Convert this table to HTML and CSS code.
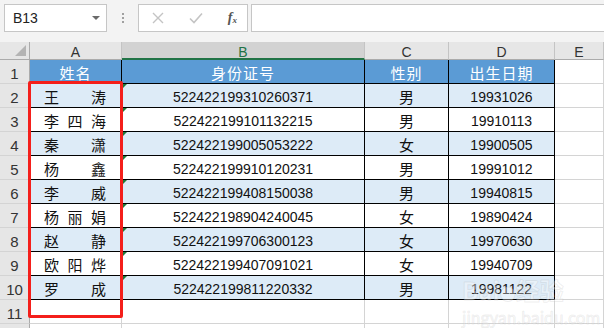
FILE: index.html
```html
<!DOCTYPE html>
<html lang="zh">
<head>
<meta charset="utf-8">
<link rel="stylesheet" href="styles.css">
</head>
<body>
<div class="app">
  <div class="fbar">
    <div class="namebox"><span>B13</span><span class="caret"></span></div>
    <div class="grip"><i></i><i></i><i></i></div>
    <div class="fxbox">
      <svg class="ico" width="12" height="12" viewBox="0 0 12 12"><path d="M1 1L11 11M11 1L1 11" stroke="#c4c4c4" stroke-width="1.4" fill="none"/></svg>
      <svg class="ico" width="14" height="12" viewBox="0 0 14 12"><path d="M1 6.5L5 10.5L13 1.5" stroke="#c4c4c4" stroke-width="1.6" fill="none"/></svg>
      <span class="fx">f<sub>x</sub></span>
    </div>
    <div class="input"></div>
  </div>
  <div class="sheetwrap">
    <div class="sheet">
      <div class="corner"><span class="tri"></span></div>
      <div class="ch">A</div><div class="ch sel">B</div><div class="ch">C</div><div class="ch">D</div><div class="ch">E</div>

      <div class="rh">1</div>
      <div class="c t hd">姓名</div><div class="c t hd">身份证号</div><div class="c t hd">性别</div><div class="c t hd">出生日期</div><div class="c g"></div>

      <div class="rh">2</div>
      <div class="c t alt nm"><span>王</span><span>涛</span></div><div class="c t alt id">522422199310260371</div><div class="c t alt sx">男</div><div class="c t alt">19931026</div><div class="c g"></div>

      <div class="rh">3</div>
      <div class="c t nm"><span>李</span><span>四</span><span>海</span></div><div class="c t id">522422199101132215</div><div class="c t sx">男</div><div class="c t">19910113</div><div class="c g"></div>

      <div class="rh">4</div>
      <div class="c t alt nm"><span>秦</span><span>潇</span></div><div class="c t alt id">522422199005053222</div><div class="c t alt sx">女</div><div class="c t alt">19900505</div><div class="c g"></div>

      <div class="rh">5</div>
      <div class="c t nm"><span>杨</span><span>鑫</span></div><div class="c t id">522422199910120231</div><div class="c t sx">男</div><div class="c t">19991012</div><div class="c g"></div>

      <div class="rh">6</div>
      <div class="c t alt nm"><span>李</span><span>威</span></div><div class="c t alt id">522422199408150038</div><div class="c t alt sx">男</div><div class="c t alt">19940815</div><div class="c g"></div>

      <div class="rh">7</div>
      <div class="c t nm"><span>杨</span><span>丽</span><span>娟</span></div><div class="c t id">522422198904240045</div><div class="c t sx">女</div><div class="c t">19890424</div><div class="c g"></div>

      <div class="rh">8</div>
      <div class="c t alt nm"><span>赵</span><span>静</span></div><div class="c t alt id">522422199706300123</div><div class="c t alt sx">女</div><div class="c t alt">19970630</div><div class="c g"></div>

      <div class="rh">9</div>
      <div class="c t nm"><span>欧</span><span>阳</span><span>烨</span></div><div class="c t id">522422199407091021</div><div class="c t sx">女</div><div class="c t">19940709</div><div class="c g"></div>

      <div class="rh">10</div>
      <div class="c t alt nm"><span>罗</span><span>成</span></div><div class="c t alt id">522422199811220332</div><div class="c t alt sx">男</div><div class="c t alt">19981122</div><div class="c g"></div>

      <div class="rh">11</div>
      <div class="c g"></div><div class="c g"></div><div class="c g"></div><div class="c g"></div><div class="c g"></div>

      <div class="rh"></div>
      <div class="c g"></div><div class="c g"></div><div class="c g"></div><div class="c g"></div><div class="c g"></div>
    </div>
    <div class="redbox"></div>
    <div class="wm"><div class="wm1">Bai<span class="paw">●</span>经验</div><div class="wm2">jingyan.baidu.com</div></div>
  </div>
</div>
</body>
</html>
```

FILE: styles.css
```css
* { box-sizing: border-box; }
html, body { margin: 0; padding: 0; }
body {
  width: 604px;
  height: 328px;
  overflow: hidden;
  background: #ffffff;
  font-family: "Liberation Sans", "Noto Sans CJK SC", sans-serif;
}
.app { width: 604px; height: 328px; overflow: hidden; }

.fbar {
  height: 42px;
  background: #f3f3f3;
  display: flex;
  align-items: flex-start;
  padding: 4px 0 0 4px;
}
.namebox {
  width: 103px;
  height: 28px;
  background: #fff;
  border: 1px solid #c6c6c6;
  display: flex;
  align-items: center;
  justify-content: space-between;
  padding: 0 6px 0 8px;
  font-size: 14px;
  color: #222;
}
.caret {
  width: 0; height: 0;
  border-left: 4px solid transparent;
  border-right: 4px solid transparent;
  border-top: 4px solid #6a6a6a;
}
.grip {
  width: 31px;
  height: 28px;
  display: flex;
  flex-direction: column;
  align-items: center;
  justify-content: center;
  gap: 2px;
}
.grip i {
  display: block;
  width: 2px; height: 2px;
  background: #a0a0a0;
}
.fxbox {
  width: 110px;
  height: 28px;
  background: #fff;
  border: 1px solid #c6c6c6;
  display: flex;
  align-items: center;
  justify-content: space-between;
  padding: 0 10px 0 13px;
}
.fx {
  font-family: "Liberation Serif", serif;
  font-style: italic;
  font-size: 14px;
  color: #555;
  line-height: 1;
  font-weight: bold;
}
.fx sub { font-size: 9px; vertical-align: -1px; }
.input {
  flex: 1;
  height: 28px;
  margin-left: 3px;
  background: #fff;
  border: 1px solid #c6c6c6;
  border-right: none;
}

.sheetwrap { position: relative; }
.sheet {
  display: grid;
  grid-template-columns: 30px 92px 243px 84px 106px 49px;
  grid-template-rows: 18px repeat(11, 24px) 24px;
}
.corner {
  background: #e6e6e6;
  border-right: 1px solid #ababab;
  border-bottom: 1px solid #ababab;
  position: relative;
}
.tri {
  position: absolute;
  right: 3px; bottom: 3px;
  width: 0; height: 0;
  border-left: 11px solid transparent;
  border-bottom: 11px solid #b4b4b4;
}
.ch {
  background: #e6e6e6;
  border-right: 1px solid #c4c4c4;
  border-bottom: 1px solid #ababab;
  font-size: 14px;
  color: #333;
  text-align: center;
  line-height: 19px;
  padding-top: 1px;
}
.ch.sel {
  background: #d2d2d2;
  color: #217346;
  border-bottom: 2px solid #217346;
}
.rh {
  background: #e6e6e6;
  border-right: 1px solid #ababab;
  border-bottom: 1px solid #d4d4d4;
  font-size: 15px;
  color: #333;
  text-align: center;
  line-height: 24px;
  padding-top: 2px;
}
.c {
  border-right: 1px solid #d4d4d4;
  border-bottom: 1px solid #d4d4d4;
  background: #fff;
  font-size: 14px;
  color: #111;
  display: flex;
  align-items: center;
  justify-content: center;
  padding-top: 3px;
  white-space: nowrap;
}
.c.t { border-right-color: #000; border-bottom-color: #000; }
.c.hd {
  background: #5b9bd5;
  color: #fff;
  font-family: "Noto Sans CJK SC", sans-serif;
  font-size: 15px;
  letter-spacing: 1px;
  padding-top: 1px;
}
.c.alt { background: #ddebf7; }
.nm {
  justify-content: space-between;
  padding-left: 14px;
  padding-right: 15px;
  font-family: "Noto Sans CJK SC", sans-serif;
  font-size: 15px;
  padding-top: 1px;
}
.sx { font-family: "Noto Sans CJK SC", sans-serif; font-size: 15px; padding-top: 1px; }
.id { position: relative; }
.id::before {
  content: "";
  position: absolute;
  left: 0; top: 0;
  width: 0; height: 0;
  border-top: 5px solid #1f7a3a;
  border-right: 5px solid transparent;
}
.redbox {
  position: absolute;
  left: 28px;
  top: 39px;
  width: 95px;
  height: 237px;
  border: 3px solid #f41f1b;
  border-radius: 2px;
}
.wm {
  position: absolute;
  left: 462px;
  top: 234px;
  color: rgba(255,255,255,0.35);
  -webkit-text-stroke: 1px rgba(120,120,120,0.13);
  font-family: "Noto Sans CJK SC", sans-serif;
  pointer-events: none;
}
.wm1 { font-size: 24px; font-weight: bold; line-height: 28px; }
.paw { font-size: 16px; }
.wm2 { font-size: 16px; line-height: 20px; }
```
